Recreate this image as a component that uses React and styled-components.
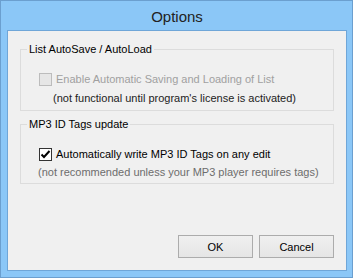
import React from 'react';
import styled, { createGlobalStyle } from 'styled-components';

const GlobalStyle = createGlobalStyle`
  html, body {
    margin: 0;
    padding: 0;
    background: #fff;
  }
  body {
    font-family: "Liberation Sans", Arial, sans-serif;
  }
`;

const Window = styled.div`
  box-sizing: border-box;
  width: 353px;
  height: 278px;
  border: 1px solid #6b9fcf;
  background: #8bc7f7;
  display: flex;
  flex-direction: column;
  padding: 0 5px 6px 6px;
`;

const TitleBar = styled.div`
  height: 29px;
  display: flex;
  align-items: center;
  justify-content: center;
  font-size: 15px;
  color: #222;
  padding-top: 1px;
  box-sizing: border-box;
`;

const Client = styled.div`
  flex: 1;
  box-sizing: border-box;
  border: 1px solid #6fa6d8;
  background: #f0f0f0;
  padding: 12px 12px 12px 12px;
  display: flex;
  flex-direction: column;
`;

const Group = styled.fieldset`
  margin: 0 0 ${p => p.$after || 0}px;
  padding: 0 0 ${p => p.$bottom || 5}px;
  border: 1px solid #dcdcdc;
  min-width: 0;
  display: flex;
  flex-direction: column;
`;

const Legend = styled.legend`
  margin-left: 6px;
  padding: 0 2px;
  font-size: 11px;
  line-height: 13px;
  color: #000;
`;

const Row = styled.div`
  display: flex;
  align-items: center;
  gap: 4px;
  height: 13px;
  margin-left: ${p => p.$indent}px;
  margin-top: ${p => p.$top}px;
  font-size: 11px;
  line-height: 13px;
  white-space: nowrap;
  color: ${p => p.$color || '#000'};
`;

const Box = styled.span`
  box-sizing: border-box;
  width: 13px;
  height: 13px;
  flex: none;
  display: flex;
  align-items: center;
  justify-content: center;
  border: 1px solid ${p => (p.$disabled ? '#bcbcbc' : '#333')};
  background: ${p => (p.$disabled ? '#e6e6e6' : '#fff')};
`;

const Buttons = styled.div`
  margin-top: auto;
  display: flex;
  justify-content: flex-end;
  gap: 6px;
`;

const Button = styled.button`
  box-sizing: border-box;
  width: 75px;
  height: 23px;
  border: 1px solid #acacac;
  background: linear-gradient(#f0f0f0, #e5e5e5);
  font-family: "Liberation Sans", Arial, sans-serif;
  font-size: 11px;
  color: #000;
  padding: 0;
`;

const Check = ({ checked, disabled }) => (
  <Box $disabled={disabled}>
    {checked && (
      <svg width="11" height="11" viewBox="0 0 11 11">
        <path d="M1.5 5.5 L4 8 L9.5 2" fill="none" stroke="#000" strokeWidth="2" />
      </svg>
    )}
  </Box>
);

export default function App() {
  return (
    <>
      <GlobalStyle />
      <Window>
        <TitleBar>Options</TitleBar>
        <Client>
          <Group $after={7}>
            <Legend>List AutoSave / AutoLoad</Legend>
            <Row $indent={18} $top={17} $color="#a0a0a0">
              <Check disabled />
              Enable Automatic Saving and Loading of List
            </Row>
            <Row $indent={32} $top={6} $color="#222">
              (not functional until program's license is activated)
            </Row>
          </Group>
          <Group $bottom={4}>
            <Legend>MP3 ID Tags update</Legend>
            <Row $indent={18} $top={17}>
              <Check checked />
              Automatically write MP3 ID Tags on any edit
            </Row>
            <Row $indent={17} $top={5} $color="#6d6d6d">
              (not recommended unless your MP3 player requires tags)
            </Row>
          </Group>
          <Buttons>
            <Button>OK</Button>
            <Button>Cancel</Button>
          </Buttons>
        </Client>
      </Window>
    </>
  );
}
